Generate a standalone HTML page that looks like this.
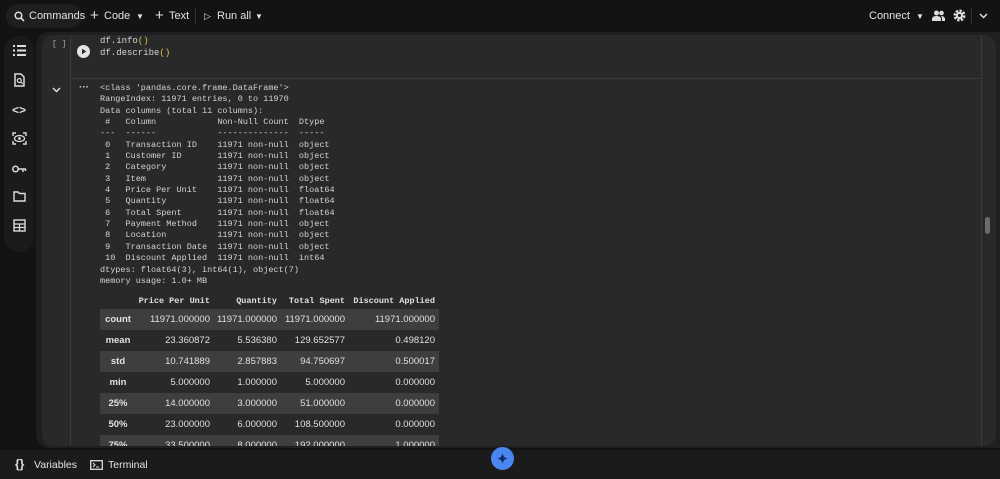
<!DOCTYPE html>
<html><head><meta charset="utf-8"><style>
*{margin:0;padding:0;box-sizing:border-box}
body{width:1000px;height:479px;overflow:hidden;background:#131314;font-family:"Liberation Sans",sans-serif;color:#e3e3e3;position:relative}
.top{position:absolute;left:0;top:0;width:1000px;height:32px;background:#131314;font-size:11px}
.top span{position:absolute;top:10px;white-space:nowrap}
.side{position:absolute;left:4px;top:36px;width:30px;height:216px;background:#1b1b1c;border-radius:15px}
.main{position:absolute;left:36px;top:32px;width:964px;height:416px;background:#1e1f20;border-radius:14px 0 0 14px}
.cell{position:absolute;left:42px;top:35px;width:954px;height:411px;background:#28292a;border-radius:12px;overflow:hidden}
.gut{position:absolute;left:28px;top:0;width:1px;height:412px;background:#3a3b3c}
.rline{position:absolute;left:939px;top:0;width:1px;height:412px;background:#3a3b3c}
.hsep{position:absolute;left:28px;top:43px;width:912px;height:1px;background:#3a3b3c}
pre{font-family:"Liberation Mono",monospace;font-size:8.5px;line-height:11.35px;color:#d4d4d4;position:absolute}
table{position:absolute;left:58px;top:258px;border-collapse:collapse;table-layout:fixed;width:339px;font-size:9.5px;color:#e0e0e0}
td,th{height:21px;text-align:right;padding:0 4px 0 0;white-space:nowrap;overflow:visible}
th{font-family:"Liberation Mono",monospace;font-size:8.5px;height:16px}
td:first-child{text-align:center;font-weight:bold;padding:0}
tr.o td{background:#3d3e3f}
.bot{position:absolute;left:0;top:450px;width:1000px;height:29px;background:#1b1b1c;font-size:10.5px}
.bot span{position:absolute;top:9px;white-space:nowrap}
</style></head><body>
<div class="top">
<div style="position:absolute;left:6px;top:4px;width:76px;height:24px;background:#1f1f20;border-radius:12px"></div>
<svg style="position:absolute;left:14px;top:11px" width="11" height="11"><circle cx="4.5" cy="4.5" r="3.3" stroke="#ddd" stroke-width="1.5" fill="none"/><path d="M7 7L10 10" stroke="#ddd" stroke-width="1.6"/></svg>
<span style="left:29px">Commands</span>
<span style="left:90px;top:7px;font-size:15px">+</span><span style="left:104px">Code</span><span style="left:136px;font-size:8px;top:12px">▼</span>
<span style="left:155px;top:7px;font-size:15px">+</span><span style="left:169px">Text</span>
<div style="position:absolute;left:195px;top:8px;width:1px;height:16px;background:#333"></div>
<span style="left:204px;font-size:9px;top:11px">▷</span><span style="left:217px">Run all</span><span style="left:255px;font-size:8px;top:12px">▼</span>
<span style="left:869px">Connect</span><span style="left:916px;font-size:8px;top:12px">▼</span>
<svg style="position:absolute;left:932px;top:10px" width="13" height="11"><circle cx="4.5" cy="3" r="2.5" fill="#ddd"/><circle cx="9.5" cy="3" r="2.3" fill="#ddd"/><path d="M0 11v-2c0-2 2-3 4.5-3s4.5 1 4.5 3v2zM9 6c2 0 4 1 4 3v2h-3v-2c0-1-.5-2-1-3z" fill="#ddd"/></svg>
<svg style="position:absolute;left:953px;top:9px" width="13" height="13"><circle cx="6.5" cy="6.5" r="4.5" fill="none" stroke="#ddd" stroke-width="3" stroke-dasharray="2.2 1.3"/><circle cx="6.5" cy="6.5" r="3.5" fill="#ddd"/><circle cx="6.5" cy="6.5" r="1.5" fill="#131314"/></svg>
<div style="position:absolute;left:971px;top:8px;width:1px;height:16px;background:#333"></div>
<svg style="position:absolute;left:979px;top:13px" width="9" height="6"><path d="M1 1l3.5 3.5L8 1" stroke="#ddd" stroke-width="1.5" fill="none"/></svg>
</div>
<div class="side">
<svg style="position:absolute;left:9px;top:9px" width="13" height="11" fill="#ddd"><rect x="0" y="0" width="2" height="2"/><rect x="4" y="0" width="9" height="2"/><rect x="0" y="4.5" width="2" height="2"/><rect x="4" y="4.5" width="9" height="2"/><rect x="0" y="9" width="2" height="2"/><rect x="4" y="9" width="9" height="2"/></svg>
<svg style="position:absolute;left:10px;top:37px" width="11" height="14"><path d="M1 1h6l3 3v9H1z" fill="none" stroke="#ddd" stroke-width="1.5"/><circle cx="5.3" cy="7.5" r="2" fill="none" stroke="#ddd" stroke-width="1.2"/><path d="M6.8 9l2 2" stroke="#ddd" stroke-width="1.2"/></svg>
<span style="position:absolute;left:8px;top:67px;font-size:12px;font-weight:bold;color:#ddd">&lt;&gt;</span>
<svg style="position:absolute;left:8px;top:96px" width="15" height="13"><path d="M1 4V1h3M11 1h3v3M14 9v3h-3M4 12H1V9" stroke="#ddd" stroke-width="1.4" fill="none"/><ellipse cx="7.5" cy="6.5" rx="5" ry="3" fill="none" stroke="#ddd" stroke-width="1.3"/><circle cx="7.5" cy="6.5" r="1.4" fill="#ddd"/></svg>
<svg style="position:absolute;left:8px;top:129px" width="15" height="8"><circle cx="3.5" cy="4" r="2.7" fill="none" stroke="#ddd" stroke-width="1.5"/><path d="M6 4h8M11 4v3M13.5 4v2" stroke="#ddd" stroke-width="1.5"/></svg>
<svg style="position:absolute;left:9px;top:155px" width="13" height="11"><path d="M1 1h4l1.5 1.5H12V10H1z" fill="none" stroke="#ddd" stroke-width="1.4"/></svg>
<svg style="position:absolute;left:9px;top:183px" width="13" height="13"><rect x="1" y="1" width="11" height="11" fill="none" stroke="#ddd" stroke-width="1.4"/><path d="M1 5h11M1 8.5h11M6.5 5v7" stroke="#ddd" stroke-width="1.2"/></svg>
</div>
<div class="main"></div>
<div class="cell">
<div class="gut"></div><div class="rline"></div><div class="hsep"></div>
<span style="position:absolute;left:10px;top:5px;font-family:'Liberation Mono',monospace;font-size:8px;color:#aaa">[ ]</span>
<svg style="position:absolute;left:35px;top:10px" width="13" height="13"><circle cx="6.5" cy="6.5" r="6.5" fill="#e3e3e3"/><path d="M5 3.8v5.4L9.3 6.5z" fill="#28292a"/></svg>
<pre style="left:58px;top:0px;font-size:9px;line-height:12px">df.info<span style="color:#e5c04a">()</span>
df.describe<span style="color:#e5c04a">()</span></pre>
<svg style="position:absolute;left:10px;top:52px" width="9" height="6"><path d="M1 1l3.5 3.5L8 1" stroke="#ddd" stroke-width="1.5" fill="none"/></svg>
<span style="position:absolute;left:37px;top:47px;font-size:10px;font-weight:bold;color:#ccc">···</span>
<pre style="left:58px;top:48px">&lt;class 'pandas.core.frame.DataFrame'&gt;
RangeIndex: 11971 entries, 0 to 11970
Data columns (total 11 columns):
 #   Column            Non-Null Count  Dtype  
---  ------            --------------  -----  
 0   Transaction ID    11971 non-null  object 
 1   Customer ID       11971 non-null  object 
 2   Category          11971 non-null  object 
 3   Item              11971 non-null  object 
 4   Price Per Unit    11971 non-null  float64
 5   Quantity          11971 non-null  float64
 6   Total Spent       11971 non-null  float64
 7   Payment Method    11971 non-null  object 
 8   Location          11971 non-null  object 
 9   Transaction Date  11971 non-null  object 
 10  Discount Applied  11971 non-null  int64  
dtypes: float64(3), int64(1), object(7)
memory usage: 1.0+ MB</pre>
<table>
<colgroup><col style="width:36px"><col style="width:78px"><col style="width:67px"><col style="width:68px"><col style="width:90px"></colgroup>
<tr><th></th><th>Price Per Unit</th><th>Quantity</th><th>Total Spent</th><th>Discount Applied</th></tr>
<tr class="o"><td>count</td><td>11971.000000</td><td>11971.000000</td><td>11971.000000</td><td>11971.000000</td></tr>
<tr><td>mean</td><td>23.360872</td><td>5.536380</td><td>129.652577</td><td>0.498120</td></tr>
<tr class="o"><td>std</td><td>10.741889</td><td>2.857883</td><td>94.750697</td><td>0.500017</td></tr>
<tr><td>min</td><td>5.000000</td><td>1.000000</td><td>5.000000</td><td>0.000000</td></tr>
<tr class="o"><td>25%</td><td>14.000000</td><td>3.000000</td><td>51.000000</td><td>0.000000</td></tr>
<tr><td>50%</td><td>23.000000</td><td>6.000000</td><td>108.500000</td><td>0.000000</td></tr>
<tr class="o"><td>75%</td><td>33.500000</td><td>8.000000</td><td>192.000000</td><td>1.000000</td></tr>
</table>
</div>
<div style="position:absolute;left:985px;top:217px;width:5px;height:17px;background:#6a6a6a;border-radius:3px"></div>
<div class="bot">
<span style="left:15px;top:7px;font-size:12px;font-weight:bold">{}</span><span style="left:34px">Variables</span>
<svg style="position:absolute;left:90px;top:10px" width="13" height="10"><rect x="0.7" y="0.7" width="11.6" height="8.6" fill="none" stroke="#ddd" stroke-width="1.3"/><path d="M3 3l2 2-2 2M6 7h3" stroke="#ddd" stroke-width="1.1" fill="none"/></svg>
<span style="left:108px">Terminal</span>
<div style="position:absolute;left:491px;top:-3px;width:23px;height:23px;border-radius:50%;background:#4a86f0"></div>
<svg style="position:absolute;left:497px;top:3px" width="11" height="11"><path d="M5.5 0Q6 5 11 5.5Q6 6 5.5 11Q5 6 0 5.5Q5 5 5.5 0z" fill="#0d2a66"/></svg>
</div>
</body></html>
